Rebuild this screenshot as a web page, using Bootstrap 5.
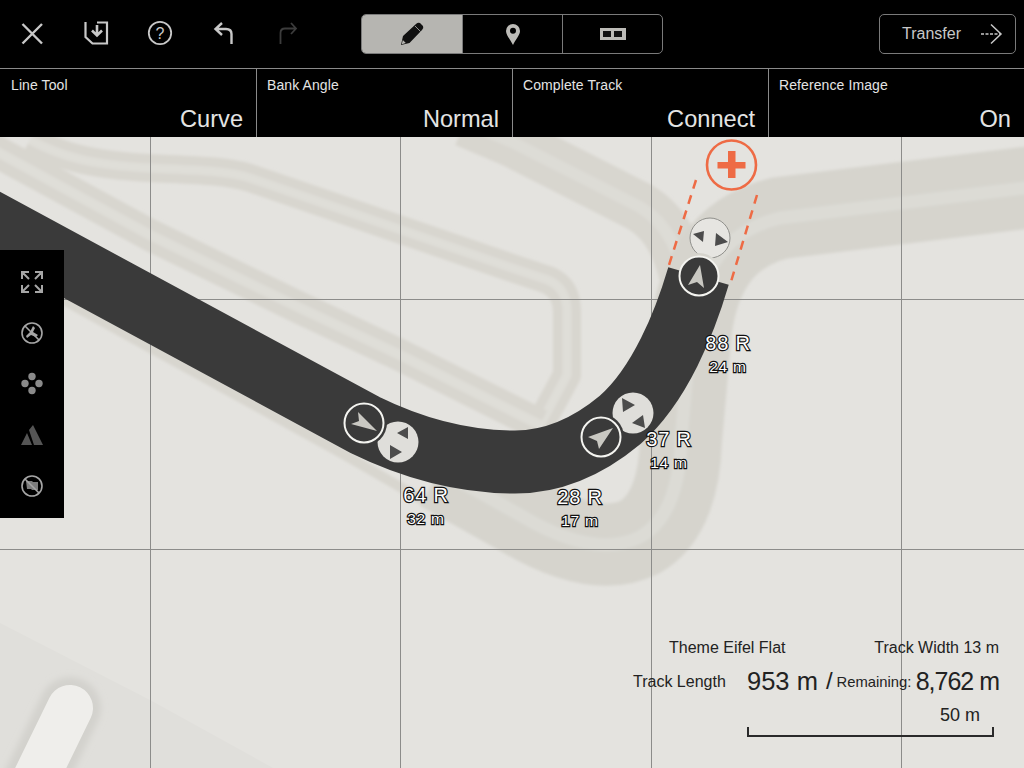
<!DOCTYPE html>
<html lang="en">
<head>
<meta charset="utf-8">
<title>Track Editor</title>
<link href="https://cdn.jsdelivr.net/npm/bootstrap@5.3.0/dist/css/bootstrap.min.css" rel="stylesheet">
<style>
html,body{width:1024px;height:768px;overflow:hidden;background:#000;font-family:"Liberation Sans",Arial,sans-serif}
.ed-top{height:69px;background:#000;border-bottom:1px solid #8a8a8a}
.ed-tool{width:64px;height:68px;padding:0;border:0;background:transparent}
.ed-tool svg,.ed-seg svg,.ed-side svg,.ed-xfer svg{display:block}
.ed-tool svg{margin:auto}
.ed-seg{margin-left:41px;width:302px;height:40px;border:1px solid #7a7a7a;border-radius:5px;overflow:hidden}
.ed-segcell{width:100px;height:100%;border-left:1px solid #7a7a7a}
.ed-segcell:first-child{border-left:0;background:#b6b5b1}
.ed-xfer{width:137px;height:40px;margin-left:auto;margin-right:8px;border:1px solid #7a7a7a;border-radius:5px;color:#c8c8c8;font-size:16px;padding:0 12px 0 22px}
.ed-params{height:68px;background:#000}
.ed-param{width:256px;height:68px;border-left:1px solid #8a8a8a;padding:8px 13px 4px 10px;color:#e4e4e4}
.ed-param:first-child{border-left:0;padding-left:11px}
.ed-plabel{font-size:14px;line-height:17px;letter-spacing:.1px}
.ed-pvalue{font-size:23.600px;line-height:28px;margin-top:auto;text-align:right}
.ed-map{height:631px;background:#e4e3df;overflow:hidden}
.ed-map>svg{display:block}
.ed-side{left:0;top:113px;width:64px;height:268px;background:#000;padding:7px 0}
.ed-sideitem{height:51px}
.ed-info{right:0;top:499px;width:404px;color:#222;font-size:16px;line-height:20px}
.ed-row1{padding:0 25px 0 49px;height:24px}
.ed-row2{padding:0 25px 0 13px;height:44px}
.ed-big{font-size:25.500px;line-height:32px;margin-bottom:2px}
.ed-bigtight{font-size:25px;line-height:32px;letter-spacing:-1px;margin-bottom:2px}
.ed-len{width:114px}
.ed-slash{font-size:24px;margin:0 4px 2px 8px}
.ed-rem{font-size:14.800px}
.ed-scale{padding:0 30px 0 127px}
.ed-scaletxt{font-size:18px;line-height:22px;text-align:right;padding-right:14px}
.ed-scalebar{height:10px;border:solid #2a2a2a;border-width:0 2px 2px 2px;margin-top:1px}
.ed-lbl{font-family:"Liberation Sans",Arial,sans-serif;text-anchor:middle;fill:#fff;stroke:#111;stroke-width:2.400px;paint-order:stroke fill;letter-spacing:.8px}
.ed-lr{font-size:20px}
.ed-lm{font-size:15.500px}
</style>
</head>
<body>
<div class="ed-top d-flex align-items-center">
  <button class="ed-tool" type="button" aria-label="Close"><svg width="64" height="68" fill="none" stroke="#c8c8c8" stroke-width="2.400"><path d="M22.500 24 42 43.500M42 24 22.500 43.500"/></svg></button>
  <button class="ed-tool" type="button" aria-label="Save"><svg width="64" height="68" fill="none" stroke="#c8c8c8" stroke-width="2.200"><path d="M21.500 22V37L28.500 43.500H43V22.500H33"/><path stroke-width="2.600" d="M33 25V35M28 30.500 33 35.500 38 30.500"/></svg></button>
  <button class="ed-tool" type="button" aria-label="Help"><svg width="64" height="68"><circle cx="32" cy="33" r="11.200" fill="none" stroke="#c8c8c8" stroke-width="1.800"/><text x="32" y="39" text-anchor="middle" font-size="16" font-family="Liberation Sans" fill="#c8c8c8">?</text></svg></button>
  <button class="ed-tool" type="button" aria-label="Undo"><svg width="64" height="68" fill="none" stroke="#c8c8c8" stroke-width="2.400"><path d="M30 23 23.500 29 30 35M24 29H34Q39.500 29 39.500 34V44"/></svg></button>
  <button class="ed-tool" type="button" aria-label="Redo"><svg width="64" height="68" fill="none" stroke="#3c3c3c" stroke-width="1.800"><path d="M35 23 40 28.500 35 34M40 28.500H29Q24.500 28.500 24.500 33V44"/></svg></button>
  <div class="ed-seg d-flex">
    <div class="ed-segcell d-flex align-items-center justify-content-center"><svg width="24" height="24" viewBox="0 0 24 24"><path fill="#111" d="M1 23 3 14 16 2Q18 0 20 1L23 4Q24 6 22 8L9.500 21Z"/><path fill="#b6b5b1" d="M1.800 22.200 2.800 18 5.800 21Z"/><path fill="none" stroke="#b6b5b1" stroke-width=".8" d="M15 4 20.500 9.500"/></svg></div>
    <div class="ed-segcell d-flex align-items-center justify-content-center"><svg width="16" height="22" viewBox="0 0 16 22"><path fill="#bcbbb7" fill-rule="evenodd" d="M8 22C5 16 1 12 1 8A7 7 0 0 1 15 8C15 12 11 16 8 22ZM8 4.800A3 3 0 1 0 8 10.800 3 3 0 0 0 8 4.800Z"/></svg></div>
    <div class="ed-segcell d-flex align-items-center justify-content-center"><svg width="26" height="14" viewBox="0 0 26 14"><path fill="#bcbbb7" d="M0 1H26V13H0Z"/><path fill="#111" d="M3 4H11V10H3ZM14 4H22V10H14Z"/></svg></div>
  </div>
  <div class="ed-xfer d-flex align-items-center justify-content-between"><span>Transfer</span><svg width="24" height="22" fill="none" stroke="#c8c8c8"><path stroke-width="1.600" stroke-dasharray="3 1.500" d="M2 11H21"/><path stroke-width="1.500" d="M12 1.500 22 11 12 20.500"/></svg></div>
</div>
<div class="ed-params d-flex">
  <div class="ed-param d-flex flex-column"><div class="ed-plabel">Line Tool</div><div class="ed-pvalue">Curve</div></div>
  <div class="ed-param d-flex flex-column"><div class="ed-plabel">Bank Angle</div><div class="ed-pvalue">Normal</div></div>
  <div class="ed-param d-flex flex-column"><div class="ed-plabel">Complete Track</div><div class="ed-pvalue">Connect</div></div>
  <div class="ed-param d-flex flex-column"><div class="ed-plabel">Reference Image</div><div class="ed-pvalue">On</div></div>
</div>
<div class="ed-map position-relative">
  <svg width="1024" height="631" viewBox="0 137 1024 631">
    <defs>
      <filter id="soft" filterUnits="userSpaceOnUse" x="-60" y="60" width="1150" height="720"><feGaussianBlur stdDeviation="1.800"/></filter>
      <filter id="softer" filterUnits="userSpaceOnUse" x="-60" y="620" width="240" height="200"><feGaussianBlur stdDeviation="3"/></filter>
      <mask id="cutA" maskUnits="userSpaceOnUse" x="0" y="137" width="1024" height="631"><rect x="0" y="137" width="1024" height="631" fill="#fff"/><circle cx="699" cy="276" r="23" fill="#000"/></mask>
      <mask id="cutB" maskUnits="userSpaceOnUse" x="0" y="137" width="1024" height="631"><rect x="0" y="137" width="1024" height="631" fill="#fff"/><circle cx="364" cy="423" r="23" fill="#000"/></mask>
      <mask id="cutC" maskUnits="userSpaceOnUse" x="0" y="137" width="1024" height="631"><rect x="0" y="137" width="1024" height="631" fill="#fff"/><circle cx="601" cy="437" r="23" fill="#000"/></mask>
    </defs>
    <!-- reference image -->
    <path fill="#e0dfdb" d="M0 623 150 700 273 768H0Z"/>
    <path d="M70 708 30 790" stroke="#d3d2cd" stroke-width="62" stroke-linecap="round" fill="none" filter="url(#softer)"/>
    <path d="M70 708 30 790" stroke="#efeeeb" stroke-width="46" stroke-linecap="round" fill="none"/>
    <g fill="none" stroke-linejoin="round" filter="url(#soft)">
      <path stroke="#d8d6cf" stroke-width="28" d="M30 140C60 156 90 165 150 168 190 170 225 170 250 178L512 268 548 280Q567 288 567 312V375L540 425"/>
      <path stroke="#dfded8" stroke-width="9" d="M30 140C60 156 90 165 150 168 190 170 225 170 250 178L512 268 548 280Q567 288 567 312V375L540 425"/>
      <path stroke="#d8d6cf" stroke-width="32" d="M-10 148 150 235 300 308 400 355 540 425"/>
      <path stroke="#dfded8" stroke-width="10" d="M-10 148 150 235 300 308 400 355 540 425"/>
      <path stroke="#d8d6cf" stroke-width="50" d="M465 122 512 142 640 207C668 224 680 250 690 300"/>
      <path stroke="#dddcd6" stroke-width="12" d="M465 122 512 142 640 207C668 224 680 250 690 300"/>
      <path stroke="#d8d6cf" stroke-width="10" d="M60 298 345 455 440 510"/>
      <path stroke="#d6d4cd" stroke-width="82" d="M440 470 520 515C570 545 610 552 640 537 670 520 680 480 681 440L690 340C695 280 720 232 780 218L1040 186"/>
      <path stroke="#dcdbd5" stroke-width="13" d="M440 470 520 515C570 545 610 552 640 537 670 520 680 480 681 440L690 340C695 280 720 232 780 218L1040 186"/>
    </g>
    <!-- grid -->
    <path stroke="#8c8c8a" stroke-width="1" fill="none" d="M150.500 137V768M400.500 137V768M651.500 137V768M901.500 137V768M0 299.500H1024M0 549.500H1024"/>
    <!-- track -->
    <path fill="none" stroke="#3a3a3a" stroke-width="63" d="M-40 206 365 425C420 452 470 462 515 462 555 462 590 445 620 420 660 385 685 322 698.500 276"/>
    <path fill="none" stroke="#ee6b45" stroke-width="2.500" stroke-dasharray="9 7" d="M696 180 669 265M757 195 730 285"/>
    <circle cx="731.500" cy="165" r="24.500" fill="none" stroke="#ee6b45" stroke-width="2.600"/>
    <path fill="#ee6b45" d="M728 151H735.500V162H745.500V168.500H735.500V178H728V168.500H717.500V162H728Z"/>
    <!-- control handles -->
    <g mask="url(#cutA)"><circle cx="710" cy="238" r="20" fill="#e6e5e1" stroke="#8f8f8b"/></g>
    <g mask="url(#cutB)"><circle cx="398" cy="442" r="20.500" fill="#dfdeda"/></g>
    <g mask="url(#cutC)"><circle cx="633" cy="413" r="20.500" fill="#dfdeda"/></g>
    <g fill="#4c4c4c">
      <path d="M693 234 704 231 703 242ZM716 233 728 242 715 246Z"/>
      <path d="M408 427 397 433 408 439ZM390 445 402 452 390 459Z"/>
      <path d="M622 398 635 405 623 412ZM643 415 645 428 632 423Z"/>
    </g>
    <g fill="#3a3a3a" stroke="#f4f4f0" stroke-width="2">
      <circle cx="699" cy="276" r="19.500"/><circle cx="364" cy="423" r="19.500"/><circle cx="601" cy="437" r="19.500"/>
    </g>
    <g fill="#c9c8c2">
      <path d="M700 265 688 285 697 282 704 288Z"/>
      <path d="M377 431 358 412 359 421 351 424Z"/>
      <path d="M613 428 588 437 597 441 599 449Z"/>
    </g>
    <!-- labels -->
    <text class="ed-lbl ed-lr" x="728" y="350">88 R</text><text class="ed-lbl ed-lm" x="728" y="372">24 m</text>
    <text class="ed-lbl ed-lr" x="669" y="446">37 R</text><text class="ed-lbl ed-lm" x="669" y="468">14 m</text>
    <text class="ed-lbl ed-lr" x="426" y="502">64 R</text><text class="ed-lbl ed-lm" x="426" y="524">32 m</text>
    <text class="ed-lbl ed-lr" x="580" y="504">28 R</text><text class="ed-lbl ed-lm" x="580" y="526">17 m</text>
  </svg>
  <div class="ed-side position-absolute d-flex flex-column">
    <div class="ed-sideitem d-flex align-items-center justify-content-center"><svg width="24" height="24" fill="none" stroke="#a6a6a6" stroke-width="2"><path d="M2 9V2H9M3 3 9 9M15 2H22V9M21 3 15 9M2 15V22H9M3 21 9 15M22 15V22H15M21 21 15 15"/></svg></div>
    <div class="ed-sideitem d-flex align-items-center justify-content-center"><svg width="24" height="24"><circle cx="12" cy="12" r="10" fill="none" stroke="#a6a6a6" stroke-width="1.600"/><path stroke="#a6a6a6" stroke-width="1.600" d="M5 5 19 19"/><path fill="#a6a6a6" d="M13 5 15 7 13 11 18 14 16 16 11 14 7 17 6 15 10 11Z"/></svg></div>
    <div class="ed-sideitem d-flex align-items-center justify-content-center"><svg width="24" height="24" fill="#8a8a8a"><circle cx="12" cy="4.500" r="3.700"/><circle cx="5" cy="11.500" r="3.700"/><circle cx="19" cy="11.500" r="3.700"/><circle cx="12" cy="18.500" r="3.700"/></svg></div>
    <div class="ed-sideitem d-flex align-items-center justify-content-center"><svg width="24" height="24" fill="#555"><path d="M1 22 7 10 12 22ZM9 7 13 2 23 22H14Z"/></svg></div>
    <div class="ed-sideitem d-flex align-items-center justify-content-center"><svg width="24" height="24"><circle cx="12" cy="12" r="10" fill="none" stroke="#a6a6a6" stroke-width="1.600"/><path fill="#7d7d7d" d="M6 7H12L13 8H18V16H12L11 15H7Z"/><path stroke="#a6a6a6" stroke-width="1.600" d="M5 5 19 19"/></svg></div>
  </div>
  <div class="ed-info position-absolute text-nowrap">
    <div class="ed-row1 d-flex justify-content-between align-items-center"><span>Theme&nbsp;Eifel Flat</span><span>Track Width 13 m</span></div>
    <div class="ed-row2 d-flex align-items-center"><span class="ed-len">Track Length</span><span class="ed-big">953 m</span><span class="ed-slash">/</span><span class="ed-rem">Remaining:</span><span class="ed-bigtight ms-auto">8,762 m</span></div>
    <div class="ed-scale"><div class="ed-scaletxt">50 m</div><div class="ed-scalebar"></div></div>
  </div>
</div>
<script src="https://cdn.jsdelivr.net/npm/bootstrap@5.3.0/dist/js/bootstrap.bundle.min.js"></script>
</body>
</html>
